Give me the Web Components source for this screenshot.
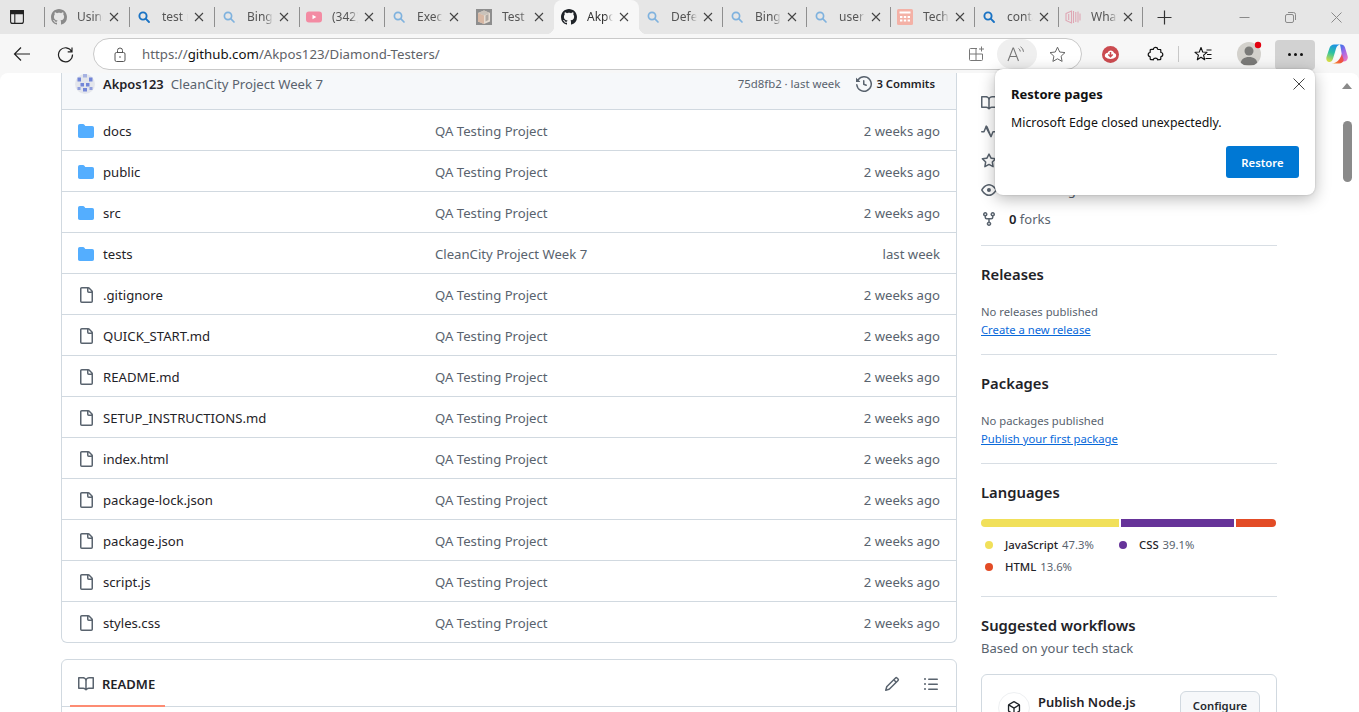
<!DOCTYPE html>
<html lang="en">
<head>
<meta charset="utf-8">
<title>Akpos123/Diamond-Testers</title>
<style>
  html, body { margin: 0; height: 100%; overflow: hidden; background: #f7f7f7; font-family: "Noto Sans", "Open Sans", sans-serif; }
  body { display: flex; flex-direction: column; height: 712px; position: relative; }
</style>
</head>
<body>
<edge-tabstrip>
  <edge-tab label="Using" icon="github-dim" sep w="85"></edge-tab>
  <edge-tab label="test results" icon="search-strong" sep w="85"></edge-tab>
  <edge-tab label="Bing" icon="search" sep w="85"></edge-tab>
  <edge-tab label="(342) YouTube" icon="youtube" sep w="85"></edge-tab>
  <edge-tab label="Execute" icon="search" w="85"></edge-tab>
  <edge-tab label="Test" icon="box" w="84"></edge-tab>
  <edge-tab label="Akpos123" icon="github" active w="85"></edge-tab>
  <edge-tab label="Defect" icon="search" sep w="84"></edge-tab>
  <edge-tab label="Bing" icon="search" sep w="84"></edge-tab>
  <edge-tab label="user" icon="search" sep w="84"></edge-tab>
  <edge-tab label="Tech" icon="calendar" sep w="84"></edge-tab>
  <edge-tab label="contact" icon="search-strong" sep w="84"></edge-tab>
  <edge-tab label="What" icon="stripes" sep w="84"></edge-tab>
</edge-tabstrip>
<edge-toolbar></edge-toolbar>
<gh-page>
  <gh-file-table></gh-file-table>
  <gh-sidebar slot="side"></gh-sidebar>
</gh-page>
<restore-popup></restore-popup>

<script>
const OCTICONS = {
  folder: 'M1.75 1A1.75 1.75 0 0 0 0 2.75v10.5C0 14.216.784 15 1.75 15h12.5A1.75 1.75 0 0 0 16 13.25v-8.5A1.75 1.75 0 0 0 14.25 3H7.5a.25.25 0 0 1-.2-.1l-.9-1.2C6.07 1.26 5.55 1 5 1H1.75Z',
  file: 'M2 1.75C2 .784 2.784 0 3.75 0h6.586c.464 0 .909.184 1.237.513l2.914 2.914c.329.328.513.773.513 1.237v9.586A1.75 1.75 0 0 1 13.25 16h-9.5A1.75 1.75 0 0 1 2 14.25Zm1.75-.25a.25.25 0 0 0-.25.25v12.5c0 .138.112.25.25.25h9.5a.25.25 0 0 0 .25-.25V6h-2.75A1.75 1.75 0 0 1 9 4.25V1.5Zm6.75.062V4.25c0 .138.112.25.25.25h2.688l-.011-.013-2.914-2.914-.013-.011Z',
  history: 'm.427 1.927 1.215 1.215a8.002 8.002 0 1 1-1.6 5.685.75.75 0 1 1 1.493-.154 6.5 6.5 0 1 0 1.18-4.458l1.358 1.358A.25.25 0 0 1 3.896 6H.25A.25.25 0 0 1 0 5.75V2.104a.25.25 0 0 1 .427-.177ZM7.75 4a.75.75 0 0 1 .75.75v2.992l2.028.812a.75.75 0 0 1-.557 1.392l-2.5-1A.751.751 0 0 1 7 8.25v-3.5A.75.75 0 0 1 7.75 4Z',
  book: 'M0 1.75A.75.75 0 0 1 .75 1h4.253c1.227 0 2.317.59 3 1.501A3.743 3.743 0 0 1 11.006 1h4.245a.75.75 0 0 1 .75.75v10.5a.75.75 0 0 1-.75.75h-4.507a2.25 2.25 0 0 0-1.591.659l-.622.621a.75.75 0 0 1-1.06 0l-.622-.621A2.25 2.25 0 0 0 5.258 13H.75a.75.75 0 0 1-.75-.75Zm7.251 10.324.004-5.073-.002-2.253A2.25 2.25 0 0 0 5.003 2.5H1.5v9h3.757a3.75 3.75 0 0 1 1.994.574ZM8.755 4.75l-.004 7.322a3.752 3.752 0 0 1 1.992-.572H14.5v-9h-3.495a2.25 2.25 0 0 0-2.25 2.25Z',
  pulse: 'M6 2c.306 0 .582.187.696.471L10 10.731l1.304-3.26A.751.751 0 0 1 12 7h3.25a.75.75 0 0 1 0 1.5h-2.742l-1.812 4.528a.751.751 0 0 1-1.392 0L5 4.77 3.696 8.03A.75.75 0 0 1 3 8.5H.75a.75.75 0 0 1 0-1.5h1.742l1.812-4.529A.751.751 0 0 1 6 2Z',
  star: 'M8 .25a.75.75 0 0 1 .673.418l1.882 3.815 4.21.612a.75.75 0 0 1 .416 1.279l-3.046 2.97.719 4.192a.751.751 0 0 1-1.088.791L8 12.347l-3.766 1.98a.75.75 0 0 1-1.088-.79l.72-4.194L.818 6.374a.75.75 0 0 1 .416-1.28l4.21-.611L7.327.668A.75.75 0 0 1 8 .25Zm0 2.445L6.615 5.5a.75.75 0 0 1-.564.41l-3.097.45 2.24 2.184a.75.75 0 0 1 .216.664l-.528 3.084 2.769-1.456a.75.75 0 0 1 .698 0l2.77 1.456-.53-3.084a.75.75 0 0 1 .216-.664l2.24-2.183-3.096-.45a.75.75 0 0 1-.564-.41L8 2.694Z',
  eye: 'M8 2c1.981 0 3.671.992 4.933 2.078 1.27 1.091 2.187 2.345 2.637 3.023a1.62 1.62 0 0 1 0 1.798c-.45.678-1.367 1.932-2.637 3.023C11.67 13.008 9.981 14 8 14c-1.981 0-3.671-.992-4.933-2.078C1.797 10.83.88 9.576.43 8.898a1.62 1.62 0 0 1 0-1.798c.45-.677 1.367-1.931 2.637-3.022C4.33 2.992 6.019 2 8 2ZM1.679 7.932a.12.12 0 0 0 0 .136c.411.622 1.241 1.75 2.366 2.717C5.176 11.758 6.527 12.5 8 12.5c1.473 0 2.825-.742 3.955-1.715 1.124-.967 1.954-2.096 2.366-2.717a.12.12 0 0 0 0-.136c-.412-.621-1.242-1.75-2.366-2.717C10.824 4.242 9.473 3.5 8 3.5c-1.473 0-2.825.742-3.955 1.715-1.124.967-1.954 2.096-2.366 2.717ZM8 10a2 2 0 1 1-.001-3.999A2 2 0 0 1 8 10Z',
  fork: 'M5 5.372v.878c0 .414.336.75.75.75h4.5a.75.75 0 0 0 .75-.75v-.878a2.25 2.25 0 1 1 1.5 0v.878a2.25 2.25 0 0 1-2.25 2.25h-1.5v2.128a2.251 2.251 0 1 1-1.5 0V8.5h-1.5A2.25 2.25 0 0 1 3.5 6.25v-.878a2.25 2.25 0 1 1 1.5 0ZM5 3.25a.75.75 0 1 0-1.5 0 .75.75 0 0 0 1.5 0Zm6.75.75a.75.75 0 1 0 0-1.5.75.75 0 0 0 0 1.5Zm-3 8.75a.75.75 0 1 0-1.5 0 .75.75 0 0 0 1.5 0Z',
  pencil: 'M11.013 1.427a1.75 1.75 0 0 1 2.474 0l1.086 1.086a1.75 1.75 0 0 1 0 2.474l-8.61 8.61c-.21.21-.47.364-.756.445l-3.251.93a.75.75 0 0 1-.927-.928l.929-3.25c.081-.286.235-.547.445-.758l8.61-8.61Zm.176 4.823L9.75 4.81l-6.286 6.287a.253.253 0 0 0-.064.108l-.558 1.953 1.953-.558a.253.253 0 0 0 .108-.064Zm1.238-3.763a.25.25 0 0 0-.354 0L10.811 3.75l1.439 1.44 1.263-1.263a.25.25 0 0 0 0-.354Z',
  list: 'M5.75 2.5h8.5a.75.75 0 0 1 0 1.5h-8.5a.75.75 0 0 1 0-1.5Zm0 5h8.5a.75.75 0 0 1 0 1.5h-8.5a.75.75 0 0 1 0-1.5Zm0 5h8.5a.75.75 0 0 1 0 1.5h-8.5a.75.75 0 0 1 0-1.5ZM2 14a1 1 0 1 1 0-2 1 1 0 0 1 0 2Zm1-6a1 1 0 1 1-2 0 1 1 0 0 1 2 0ZM2 4a1 1 0 1 1 0-2 1 1 0 0 1 0 2Z',
  github: 'M8 0c4.42 0 8 3.58 8 8a8.013 8.013 0 0 1-5.45 7.59c-.4.08-.55-.17-.55-.38 0-.27.01-1.13.01-2.2 0-.75-.25-1.23-.54-1.48 1.78-.2 3.65-.88 3.65-3.95 0-.88-.31-1.59-.82-2.15.08-.2.36-1.02-.08-2.12 0 0-.67-.22-2.2.82-.64-.18-1.32-.27-2-.27-.68 0-1.36.09-2 .27-1.53-1.03-2.2-.82-2.2-.82-.44 1.1-.16 1.92-.08 2.12-.51.56-.82 1.28-.82 2.15 0 3.06 1.86 3.75 3.64 3.95-.23.2-.44.55-.51 1.07-.46.21-1.61.55-2.33-.66-.15-.24-.6-.83-1.23-.82-.67.01-.27.38.01.53.34.19.73.9.82 1.13.16.45.68 1.31 2.69.94 0 .67.01 1.3.01 1.49 0 .21-.15.45-.55.38A7.995 7.995 0 0 1 0 8c0-4.42 3.58-8 8-8Z',
  package: 'm8.878.392 5.25 3.045c.54.314.872.89.872 1.514v6.098a1.75 1.75 0 0 1-.872 1.514l-5.25 3.045a1.75 1.75 0 0 1-1.756 0l-5.25-3.045A1.75 1.75 0 0 1 1 11.049V4.951c0-.624.332-1.201.872-1.514L7.122.392a1.75 1.75 0 0 1 1.756 0ZM7.875 1.69l-4.63 2.685L8 7.133l4.755-2.758-4.63-2.685a.248.248 0 0 0-.25 0ZM2.5 5.677v5.372c0 .09.047.171.125.216l4.625 2.683V8.432Zm6.25 8.271 4.625-2.683a.25.25 0 0 0 .125-.216V5.677L8.75 8.432Z'
};

class GhIcon extends HTMLElement {
  connectedCallback() {
    const size = this.getAttribute('size') || 16;
    const color = this.getAttribute('color') || '#59636e';
    this.attachShadow({ mode: 'open' }).innerHTML = `
      <style>:host { display: inline-flex; flex: none; width: ${size}px; height: ${size}px; } svg { display: block; }</style>
      <svg width="${size}" height="${size}" viewBox="0 0 16 16" fill="${color}"><path d="${OCTICONS[this.getAttribute('name')]}"/></svg>`;
  }
}
customElements.define('gh-icon', GhIcon);

const FAVICONS = {
  'github': `<svg width="16" height="16" viewBox="0 0 16 16" fill="#1f2328"><path d="${OCTICONS.github}"/></svg>`,
  'github-dim': `<svg width="16" height="16" viewBox="0 0 16 16" fill="#8a8a8a"><path d="${OCTICONS.github}"/></svg>`,
  'search': `<svg width="16" height="16" viewBox="0 0 16 16" fill="none" stroke="#7fb2de" stroke-width="1.7"><circle cx="7" cy="7" r="3.6"/><path d="M9.7 9.7 13 13" stroke-linecap="round"/></svg>`,
  'search-strong': `<svg width="16" height="16" viewBox="0 0 16 16" fill="none" stroke="#1a73c4" stroke-width="1.9"><circle cx="7" cy="7" r="3.6"/><path d="M9.7 9.7 13 13" stroke-linecap="round"/></svg>`,
  'youtube': `<svg width="16" height="16" viewBox="0 0 16 16"><rect y="2.5" width="16" height="11" rx="3" fill="#f38ba3"/><path d="M6.5 5.8v4.4L10.3 8Z" fill="#fff"/></svg>`,
  'box': `<svg width="16" height="16" viewBox="0 0 16 16"><rect width="16" height="16" fill="#8e8e8e"/><path d="M8 1.5 14 4v8.5L8 15 2 12.5V4Z" fill="#e6dcd2"/><path d="M8 1.5 14 4 8 6.5 2 4Z" fill="#c9c2ba"/><path d="M8 6.5V15L2 12.5V4Z" fill="#d8b8a4"/><path d="M9.5 6.5 12.5 5v6l-3 1.5Z" fill="#b0aaa4"/></svg>`,
  'calendar': `<svg width="16" height="16" viewBox="0 0 16 16"><rect width="16" height="16" rx="1.5" fill="#f4b1a6"/><path d="M2.5 2.5h11v2h-11Z" fill="#fff"/><path d="M3 7h2.4v2H3Zm3.8 0h2.4v2H6.8Zm3.8 0H13v2h-2.4ZM3 10.5h2.4v2H3Zm3.8 0h2.4v2H6.8Zm3.8 0H13v2h-2.4Z" fill="#fff"/></svg>`,
  'stripes': `<svg width="16" height="16" viewBox="0 0 16 16" fill="none" stroke="#dfa6b4" stroke-width="1.1"><path d="M1 4.5 6.5 2v12L1 11.5ZM3.7 5v6M8.5 2v12M10.8 3v10M13 2.500v11M15 4.500v7"/></svg>`
};

class EdgeTab extends HTMLElement {
  connectedCallback() {
    const active = this.hasAttribute('active');
    this.attachShadow({ mode: 'open' }).innerHTML = `
      <style>
        :host { display: grid; grid-template-columns: 16px 36px 22px; align-items: center; position: relative; box-sizing: border-box;
          width: ${this.getAttribute('w')}px; height: 34px; padding-left: ${active ? 7 : 6}px; flex: none; color: ${active ? '#333' : '#555'}; font-size: 12px; }
        :host([active]) { background: #f7f7f7; border-radius: 8px 8px 0 0; }
        :host([active])::before, :host([active])::after { content: ""; position: absolute; bottom: 0; width: 8px; height: 8px; }
        :host([active])::before { left: -8px; background: radial-gradient(circle at 0 0, transparent 8px, #f7f7f7 8.5px); }
        :host([active])::after { right: -8px; background: radial-gradient(circle at 100% 0, transparent 8px, #f7f7f7 8.5px); }
        :host([sep])::after { content: ""; position: absolute; right: 0; top: 7px; width: 1px; height: 20px; background: #8f8f8f; }
        .fav { display: flex; }
        .fav svg { display: block; }
        .label { margin-left: 10px; white-space: nowrap; overflow: hidden; line-height: 16px;
          -webkit-mask-image: linear-gradient(90deg, #000 70%, transparent 100%); mask-image: linear-gradient(90deg, #000 70%, transparent 100%); }
        .close { display: flex; justify-content: center; }
      </style>
      <span class="fav">${FAVICONS[this.getAttribute('icon')]}</span>
      <span class="label">${this.getAttribute('label')}</span>
      <span class="close"><svg width="10" height="10" viewBox="0 0 10 10" stroke="#444" stroke-width="1.1" fill="none"><path d="M1 1l8 8M9 1 1 9"/></svg></span>`;
  }
}
customElements.define('edge-tab', EdgeTab);

class EdgeTabstrip extends HTMLElement {
  constructor() {
    super();
    this.attachShadow({ mode: 'open' }).innerHTML = `
      <style>
        :host { display: flex; height: 34px; background: #e6e6e6; flex: none; }
        .toggle { width: 45px; flex: none; position: relative; display: flex; align-items: center; padding-left: 10px; box-sizing: border-box; }
        .toggle::after { content: ""; position: absolute; left: 44px; top: 7px; width: 1px; height: 20px; background: #8f8f8f; }
        .plus { margin-left: 11px; width: 20px; display: flex; justify-content: center; align-items: center; }
        .tabs { display: flex; }
        .win { margin-left: auto; display: flex; align-items: center; }
        .win span { width: 46px; display: flex; justify-content: center; }
      </style>
      <div class="toggle">
        <svg width="14" height="14" viewBox="0 0 14 14" fill="none" stroke="#222" stroke-width="1.1"><rect x=".6" y=".6" width="12.800" height="12.800" rx="2"/><path d="M4.800 3.600v9.800"/><path d="M.6 .6h12.800v3H.6Z" fill="#222"/></svg>
      </div>
      <div class="tabs"><slot></slot></div>
      <div class="plus"><svg width="15" height="15" viewBox="0 0 15 15" stroke="#333" stroke-width="1.200"><path d="M7.500.5v14M.5 7.500h14"/></svg></div>
      <div class="win">
        <span><svg width="11" height="11" viewBox="0 0 11 11" stroke="#8a8a8a"><path d="M.5 5.500h10"/></svg></span>
        <span><svg width="11" height="11" viewBox="0 0 11 11" fill="none" stroke="#8a8a8a"><rect x=".5" y="2.500" width="8" height="8" rx="1.500"/><path d="M3 .5h5.500a2 2 0 0 1 2 2V8"/></svg></span>
        <span><svg width="11" height="11" viewBox="0 0 11 11" stroke="#8a8a8a"><path d="M.5.5l10 10M10.500.5l-10 10"/></svg></span>
      </div>`;
  }
}
customElements.define('edge-tabstrip', EdgeTabstrip);

class EdgeToolbar extends HTMLElement {
  constructor() {
    super();
    this.attachShadow({ mode: 'open' }).innerHTML = `
      <style>
        :host { display: flex; align-items: flex-start; height: 39px; flex: none; background: #f7f7f7; box-sizing: border-box; padding-top: 4px; }
        .nav { width: 44px; height: 32px; display: flex; align-items: center; justify-content: center; flex: none; }
        .nav.refresh { margin-left: -1px; }
        .address { margin-left: 6px; width: 989px; height: 32px; box-sizing: border-box; border: 1px solid #c9c9c9; border-radius: 16px; background: #fff;
          display: flex; align-items: center; padding-left: 20px; flex: none; }
        .url { margin-left: 16px; font-size: 13.250px; line-height: 16px; color: #5f6368; white-space: nowrap; }
        .url b { font-weight: 400; color: #111; }
        .actions { margin-left: auto; display: flex; align-items: center; padding-right: 4px; }
        .act { width: 40px; height: 30px; display: flex; align-items: center; justify-content: center; }
        .read { background: #efefef; border-radius: 15px; }
        .tools { display: flex; align-items: center; flex: none; height: 32px; }
        .t { display: flex; justify-content: center; align-items: center; height: 32px; flex: none; }
        .divider { width: 1px; height: 16px; background: #c8c8c8; }
        .avatar { width: 24px; height: 24px; border-radius: 50%; background: #d3d1cc; overflow: hidden; }
        .more { width: 40px; height: 30px; background: #d2d2d2; border-radius: 4px; display: flex; align-items: center; justify-content: center; gap: 3px; margin-top: 1px; }
        .more i { width: 3px; height: 3px; border-radius: 50%; background: #111; }
      </style>
      <div class="nav"><svg width="18" height="16" viewBox="0 0 18 16" fill="none" stroke="#222" stroke-width="1.200"><path d="M17 8H1.500M8 1.500 1.500 8 8 14.500"/></svg></div>
      <div class="nav refresh"><svg width="17" height="17" viewBox="0 0 17 17" fill="none" stroke="#222" stroke-width="1.200"><path d="M14.700 5.500A7 7 0 1 0 15.500 8.500M15 1.500v4.300h-4.300"/></svg></div>
      <div class="address">
        <svg width="12" height="15" viewBox="0 0 12 15" fill="none" stroke="#555" stroke-width="1"><rect x="1" y="5.500" width="10" height="9" rx="1.500"/><path d="M3.500 5.500V3.500a2.500 2.500 0 0 1 5 0v2"/><circle cx="6" cy="10" r=".8" fill="#555" stroke="none"/></svg>
        <span class="url">https://<b>github.com</b>/Akpos123/Diamond-Testers/</span>
        <div class="actions">
          <span class="act"><svg width="16" height="16" viewBox="0 0 16 16" fill="none" stroke="#777"><path d="M8 2.500H1.500a1 1 0 0 0-1 1v10a1 1 0 0 0 1 1h11a1 1 0 0 0 1-1V8H.5M7 2.500v12"/><path d="M12.500.5v5M10 3h5"/></svg></span>
          <span class="act read"><svg width="20" height="16" viewBox="0 0 20 16" fill="none" stroke="#777" stroke-width="1.100"><path d="M1 15 6 2h.5l5 13M2.800 10.500h7"/><path d="M11.500 2.500a3.500 3.500 0 0 1 1.800 3M13.500.8a6 6 0 0 1 3 5" stroke-width="1"/></svg></span>
          <span class="act"><svg width="17" height="17" viewBox="0 0 17 17" fill="none" stroke="#666" stroke-width="1" stroke-linejoin="round"><path d="M8.500 1.200 10.700 6l5.300.6-3.900 3.600 1 5.200-4.600-2.600-4.600 2.600 1-5.200L1 6.600 6.300 6Z"/></svg></span>
        </div>
      </div>
      <div class="tools">
        <span class="t" style="margin-left:13px;width:30px"><svg width="17" height="17" viewBox="0 0 17 17"><circle cx="8.500" cy="8.500" r="8.500" fill="#cb4b50"/><path d="M3.200 11c-1-2 .3-4 2.300-4 .5-1.500 1.800-2.500 3.200-2.500 1.600 0 3 1.100 3.300 2.600 1.800.1 2.700 2 1.800 3.900-1.500 1.300-3.300 2-5.300 2s-3.800-.7-5.300-2Z" fill="#fff"/><path d="M8.500 6v4.500M6.300 8.500l2.200 2.200 2.200-2.200" fill="none" stroke="#cb4b50" stroke-width="1.500"/></svg></span>
        <span class="t" style="margin-left:15px;width:30px"><svg width="17" height="17" viewBox="0 0 17 17" fill="none" stroke="#111" stroke-width="1.200" stroke-linejoin="round"><path d="M6.400 3.300C6.400.8 10.600.8 10.600 3.300c1 .3 2.300.1 3 .3.400.8.100 2 .3 2.900 2.500 0 2.500 4 0 4 -.2 1 .1 2.300-.3 3-.8.400-2 .1-3 .3-.1-2.300-4.100-2.300-4.200 0-1 -.2-2.300.1-3-.3-.4-.7-.1-2-.3-3C.6 10.500.6 6.500 3.100 6.500c.2-.9-.1-2.100.3-2.900.7-.2 2-.1 3-.3Z"/></svg></span>
        <span class="divider" style="margin-left:8px"></span>
        <span class="t" style="margin-left:9px;width:30px"><svg width="18" height="17" viewBox="0 0 18 17" fill="none" stroke="#111" stroke-width="1.100" stroke-linejoin="round"><path d="M7 1.500 8.700 6l4.300.3-3.400 2.900 1.100 4.600L7 11.300l-3.700 2.500 1.100-4.600L1 6.300 5.300 6Z"/><path d="M12.500 4h5M13 8.500h4.500M11.500 12.500h6"/></svg></span>
        <span class="t" style="margin-left:18px;width:26px;position:relative"><span class="avatar"><svg width="24" height="24" viewBox="0 0 24 24" fill="#7a7a78"><circle cx="12" cy="9" r="4.500"/><path d="M3.500 23c0-6 3.800-8 8.500-8s8.500 2 8.500 8Z"/></svg></span><svg width="8" height="8" style="position:absolute;left:18px;top:3px"><circle cx="4" cy="4" r="3.200" fill="#e3000f"/></svg></span>
        <span class="t" style="margin-left:13px"><span class="more"><i></i><i></i><i></i></span></span>
        <span class="t" style="margin-left:10px;width:24px"><svg width="22" height="22" viewBox="0 0 22 22">
          <defs>
            <linearGradient id="c1" x1="0.6" y1="0" x2="0.3" y2="1"><stop offset="0" stop-color="#1b8fe8"/><stop offset=".5" stop-color="#2fc3a0"/><stop offset="1" stop-color="#d6dc45"/></linearGradient>
            <linearGradient id="c2" x1="1" y1="0" x2="0" y2="1"><stop offset="0" stop-color="#e8447a"/><stop offset=".55" stop-color="#f0563a"/><stop offset="1" stop-color="#f7a530"/></linearGradient>
            <linearGradient id="c3" x1="0.2" y1="0" x2="0.8" y2="1"><stop offset="0" stop-color="#3a72ea"/><stop offset=".5" stop-color="#a567e6"/><stop offset="1" stop-color="#ee7ac0"/></linearGradient>
          </defs>
          <path d="M14 1.500h1c2 0 3.400 1 4 3l2.600 8.500c.9 3-1 5.500-4 5.500H13c2 0 3-1 3.500-3L14.800 5.500C14.500 4 14.300 2.500 14 1.500Z" fill="url(#c3)"/>
          <path d="M8 1.500h7c-2.500 0-4 1.200-4.800 3.500L7.500 14c-.6 2.500-1.600 5-3.700 5h-.6C1 19-.2 16.500.5 14L3.500 5C4.200 2.800 6 1.500 8 1.500Z" fill="url(#c1)"/>
          <path d="M5.500 20.500H13c2.500 0 4.200-1.500 4.700-3.500l-1.800-6.500c-.6 2.300-1.700 5-3.400 6.700-1.700 1.700-4 3.300-7 3.300Z" fill="url(#c2)"/>
          <path d="M10.500 6 13.800 6.500 15 10.500c-.5 2.200-1.500 4.600-2.900 6L8.700 16Z" fill="#fff" opacity=".55"/>
        </svg></span>
      </div>`;
  }
}
customElements.define('edge-toolbar', EdgeToolbar);

const FILES = [
  ['folder', 'docs', 'QA Testing Project', '2 weeks ago'],
  ['folder', 'public', 'QA Testing Project', '2 weeks ago'],
  ['folder', 'src', 'QA Testing Project', '2 weeks ago'],
  ['folder', 'tests', 'CleanCity Project Week 7', 'last week'],
  ['file', '.gitignore', 'QA Testing Project', '2 weeks ago'],
  ['file', 'QUICK_START.md', 'QA Testing Project', '2 weeks ago'],
  ['file', 'README.md', 'QA Testing Project', '2 weeks ago'],
  ['file', 'SETUP_INSTRUCTIONS.md', 'QA Testing Project', '2 weeks ago'],
  ['file', 'index.html', 'QA Testing Project', '2 weeks ago'],
  ['file', 'package-lock.json', 'QA Testing Project', '2 weeks ago'],
  ['file', 'package.json', 'QA Testing Project', '2 weeks ago'],
  ['file', 'script.js', 'QA Testing Project', '2 weeks ago'],
  ['file', 'styles.css', 'QA Testing Project', '2 weeks ago']
];

class GhPage extends HTMLElement {
  constructor() {
    super();
    this.attachShadow({ mode: 'open' }).innerHTML = `
      <style>
        :host { display: flex; flex: 1; min-height: 0; background: #fff; border-radius: 8px 8px 0 0; overflow: hidden; padding-left: 61px; color: #1f2328; }
        .left { width: 896px; flex: none; }
        .side { width: 296px; flex: none; margin-left: 24px; }
        .bar { margin-left: auto; width: 16px; flex: none; margin-right: 4px; display: flex; flex-direction: column; align-items: center; }
        .arrow { margin-top: 10px; width: 0; height: 0; border: 5px solid transparent; border-top: 0; border-bottom: 6px solid #8a8a8a; }
        .thumb { margin-top: 32px; width: 9px; height: 61px; background: #8a8a8a; border-radius: 5px; }
      </style>
      <div class="left"><slot></slot></div>
      <div class="side"><slot name="side"></slot></div>
      <div class="bar"><span class="arrow"></span><span class="thumb"></span></div>`;
  }
}
customElements.define('gh-page', GhPage);

class GhFileTable extends HTMLElement {
  constructor() {
    super();
    const rows = FILES.map(([icon, name, msg, age], i) => `
      <div class="row ${i === FILES.length - 1 ? 'last' : ''}">
        <gh-icon name="${icon}" color="${icon === 'folder' ? '#54aeff' : '#59636e'}"></gh-icon>
        <span class="name">${name}</span>
        <span class="msg">${msg}</span>
        <span class="age">${age}</span>
      </div>`).join('');
    this.attachShadow({ mode: 'open' }).innerHTML = `
      <style>
        :host { display: block; font-size: 13.150px; }
        .table { border: 1px solid #d1d9e0; border-top: 0; border-radius: 0 0 6px 6px; }
        .head { box-sizing: border-box; background: #f6f8fa; border-bottom: 1px solid #d1d9e0; display: flex; align-items: center; height: 37px; padding: 0 21px 15px 13px; }
        .avatar { width: 20px; height: 20px; flex: none; }
        .user { margin-left: 8px; font-weight: 600; font-size: 12.900px; }
        .cmsg { margin-left: 7px; color: #59636e; font-size: 13.150px; }
        .sha { margin-left: auto; color: #59636e; font-size: 11.400px; }
        .hist { margin-left: 16px; }
        .commits { margin-left: 4px; font-weight: 600; font-size: 11.300px; }
        .row { display: grid; grid-template-columns: 16px 332px 1fr auto; align-items: center; height: 38px; padding: 2px 16px 0; border-bottom: 1px solid #d1d9e0; }
        .row.last { border-bottom: 0; }
        .name { margin-left: 9px; }
        .msg, .age { color: #59636e; }
        .msg { margin-left: 9px; }
        .readme { margin-top: 16px; border: 1px solid #d1d9e0; border-radius: 6px 6px 0 0; height: 60px; }
        .rhead { height: 47px; box-sizing: border-box; border-bottom: 1px solid #d1d9e0; display: flex; align-items: center; position: relative; padding: 1px 16px 0; }
        .tab { font-size: 13px; font-weight: 600; margin-left: 8px; }
        .under { position: absolute; left: 8px; bottom: -1px; width: 95px; height: 2px; background: #fd8c73; }
        .ract { margin-left: auto; display: flex; gap: 23px; padding-right: 1px; }
      </style>
      <div class="table">
        <div class="head">
          <svg class="avatar" viewBox="0 0 20 20"><circle cx="10" cy="10" r="10" fill="#e4e6ec"/><g fill="#7386d8"><rect x="2.500" y="3.500" width="3.500" height="4"/><rect x="14" y="3.500" width="3.500" height="4"/><rect x="8" y="0" width="4" height="3.500" opacity=".55"/><rect x="5.500" y="9" width="3.500" height="3.500"/><rect x="11" y="9" width="3.500" height="3.500"/><rect x="8" y="14" width="4" height="3.500"/><rect x="2.500" y="13" width="3" height="3" opacity=".75"/><rect x="14.500" y="13" width="3" height="3" opacity=".75"/></g></svg>
          <span class="user">Akpos123</span>
          <span class="cmsg">CleanCity Project Week 7</span>
          <span class="sha">75d8fb2 · last week</span>
          <gh-icon class="hist" name="history" color="#59636e"></gh-icon>
          <span class="commits">3 Commits</span>
        </div>
        ${rows}
      </div>
      <div class="readme">
        <div class="rhead">
          <gh-icon name="book" color="#59636e"></gh-icon>
          <span class="tab">README</span>
          <span class="under"></span>
          <div class="ract"><gh-icon name="pencil" color="#59636e"></gh-icon><gh-icon name="list" color="#59636e"></gh-icon></div>
        </div>
      </div>`;
  }
}
customElements.define('gh-file-table', GhFileTable);

class SideSection extends HTMLElement {
  constructor() {
    super();
    this.attachShadow({ mode: 'open' }).innerHTML = `
      <style>
        :host { display: block; padding: 16px 0 var(--pad-bottom, 15px); border-top: 1px solid #d8dee4; }
        h2 { margin: 0; font-size: 14.800px; font-weight: 600; line-height: 24px; color: #1f2328; }
        .body { margin-top: var(--body-gap, 17px); font-size: 11.250px; line-height: 18px; color: #59636e; }
        ::slotted(a) { color: #0969da; text-decoration: underline; display: table; }
      </style>
      <h2>${this.getAttribute('heading')}</h2>
      <div class="body"><slot></slot></div>`;
  }
}
customElements.define('side-section', SideSection);

class LangLegend extends HTMLElement {
  constructor() {
    super();
    this.attachShadow({ mode: 'open' }).innerHTML = `
      <style>
        :host { display: flex; align-items: center; height: 22px; font-size: 11.300px; color: #59636e; }
        i { width: 8px; height: 8px; border-radius: 50%; margin: 0 12px 0 4px; background: ${this.getAttribute('color')}; flex: none; }
        b { font-weight: 500; color: #1f2328; margin-right: 4px; }
      </style>
      <i></i><b>${this.getAttribute('name')}</b>${this.getAttribute('pct')}`;
  }
}
customElements.define('lang-legend', LangLegend);

class GhSidebar extends HTMLElement {
  constructor() {
    super();
    const about = [['book', 'Readme'], ['pulse', 'Activity'], ['star', '<b>0</b> stars'], ['eye', '<b>0</b> watching'], ['fork', '<b>0</b> forks']]
      .map(([ic, t]) => `<div class="item"><gh-icon name="${ic}"></gh-icon><span>${t}</span></div>`).join('');
    this.attachShadow({ mode: 'open' }).innerHTML = `
      <style>
        :host { display: block; color: #1f2328; }
        .about { padding: 15px 0 12px; }
        .item { display: flex; align-items: center; height: 29px; font-size: 13px; color: #59636e; }
        .item span { margin-left: 12px; }
        .item b { font-weight: 600; color: #1f2328; }
        .bar { display: flex; gap: 2px; height: 8px; width: 295px; border-radius: 4px; overflow: hidden; }
        .bar span { display: block; }
        .legend { display: grid; grid-template-columns: 134px auto; margin-top: 7px; }
        .lang { --body-gap: 15px; --pad-bottom: 18px; }
        .wf { --body-gap: 1px; --pad-bottom: 0; }
        .based { font-size: 13px; line-height: 21px; color: #59636e; }
        .card { margin-top: 15px; border: 1px solid #d1d9e0; border-radius: 6px; height: 90px; box-sizing: border-box; padding: 16px 16px 0 16px; display: grid; grid-template-columns: 32px 1fr auto; column-gap: 8px; align-items: start; }
        .disc { width: 32px; height: 32px; border-radius: 50%; border: 1px solid #eef0f2; box-sizing: border-box; display: flex; align-items: center; justify-content: center; margin-top: 1px; }
        .title { font-size: 13px; font-weight: 600; line-height: 20px; margin-top: 1px; color: #1f2328; }
        .cfg { box-sizing: border-box; width: 80px; height: 32px; border: 1px solid #d1d9e0; border-radius: 6px; background: #f6f8fa; font-size: 11.300px; font-weight: 600; display: flex; align-items: center; justify-content: center; padding-bottom: 2px; color: #25292e; }
      </style>
      <div class="about">${about}</div>
      <side-section heading="Releases"><div>No releases published</div><a>Create a new release</a></side-section>
      <side-section heading="Packages"><div>No packages published</div><a>Publish your first package</a></side-section>
      <side-section class="lang" heading="Languages">
        <div class="bar">
          <span style="flex:47.3;background:#f1e05a"></span><span style="flex:39.1;background:#663399"></span><span style="flex:13.6;background:#e34c26"></span>
        </div>
        <div class="legend">
          <lang-legend color="#f1e05a" name="JavaScript" pct="47.3%"></lang-legend>
          <lang-legend color="#663399" name="CSS" pct="39.1%"></lang-legend>
          <lang-legend color="#e34c26" name="HTML" pct="13.6%"></lang-legend>
        </div>
      </side-section>
      <side-section class="wf" heading="Suggested workflows">
        <div class="based">Based on your tech stack</div>
        <div class="card">
          <span class="disc"><gh-icon name="package" color="#1f2328" size="14"></gh-icon></span>
          <span class="title">Publish Node.js</span>
          <span class="cfg">Configure</span>
        </div>
      </side-section>`;
  }
}
customElements.define('gh-sidebar', GhSidebar);

class RestorePopup extends HTMLElement {
  constructor() {
    super();
    this.attachShadow({ mode: 'open' }).innerHTML = `
      <style>
        :host { position: absolute; left: 995px; top: 69px; width: 320px; height: 126px; box-sizing: border-box; background: #fff; border-radius: 8px;
          box-shadow: 0 4px 16px rgba(0,0,0,.28), 0 0 2px rgba(0,0,0,.2); padding: 16px 16px 17px; color: #111; display: flex; flex-direction: column; }
        .title { font-size: 13px; font-weight: 700; line-height: 18px; }
        .text { font-size: 12.350px; line-height: 18px; margin-top: 11px; }
        .row { margin-top: auto; display: flex; justify-content: flex-end; }
        button { width: 73px; height: 32px; border: 0; border-radius: 3px; background: #0078d4; color: #fff; font: 600 11.300px "Noto Sans", sans-serif; padding: 0; }
        svg { position: absolute; right: 10px; top: 9px; }
      </style>
      <div class="title">Restore pages</div>
      <div class="text">Microsoft Edge closed unexpectedly.</div>
      <div class="row"><button>Restore</button></div>
      <svg width="12" height="12" viewBox="0 0 12 12" stroke="#444"><path d="M.5.5l11 11M11.500.5l-11 11"/></svg>`;
  }
}
customElements.define('restore-popup', RestorePopup);
</script>
</body>
</html>
